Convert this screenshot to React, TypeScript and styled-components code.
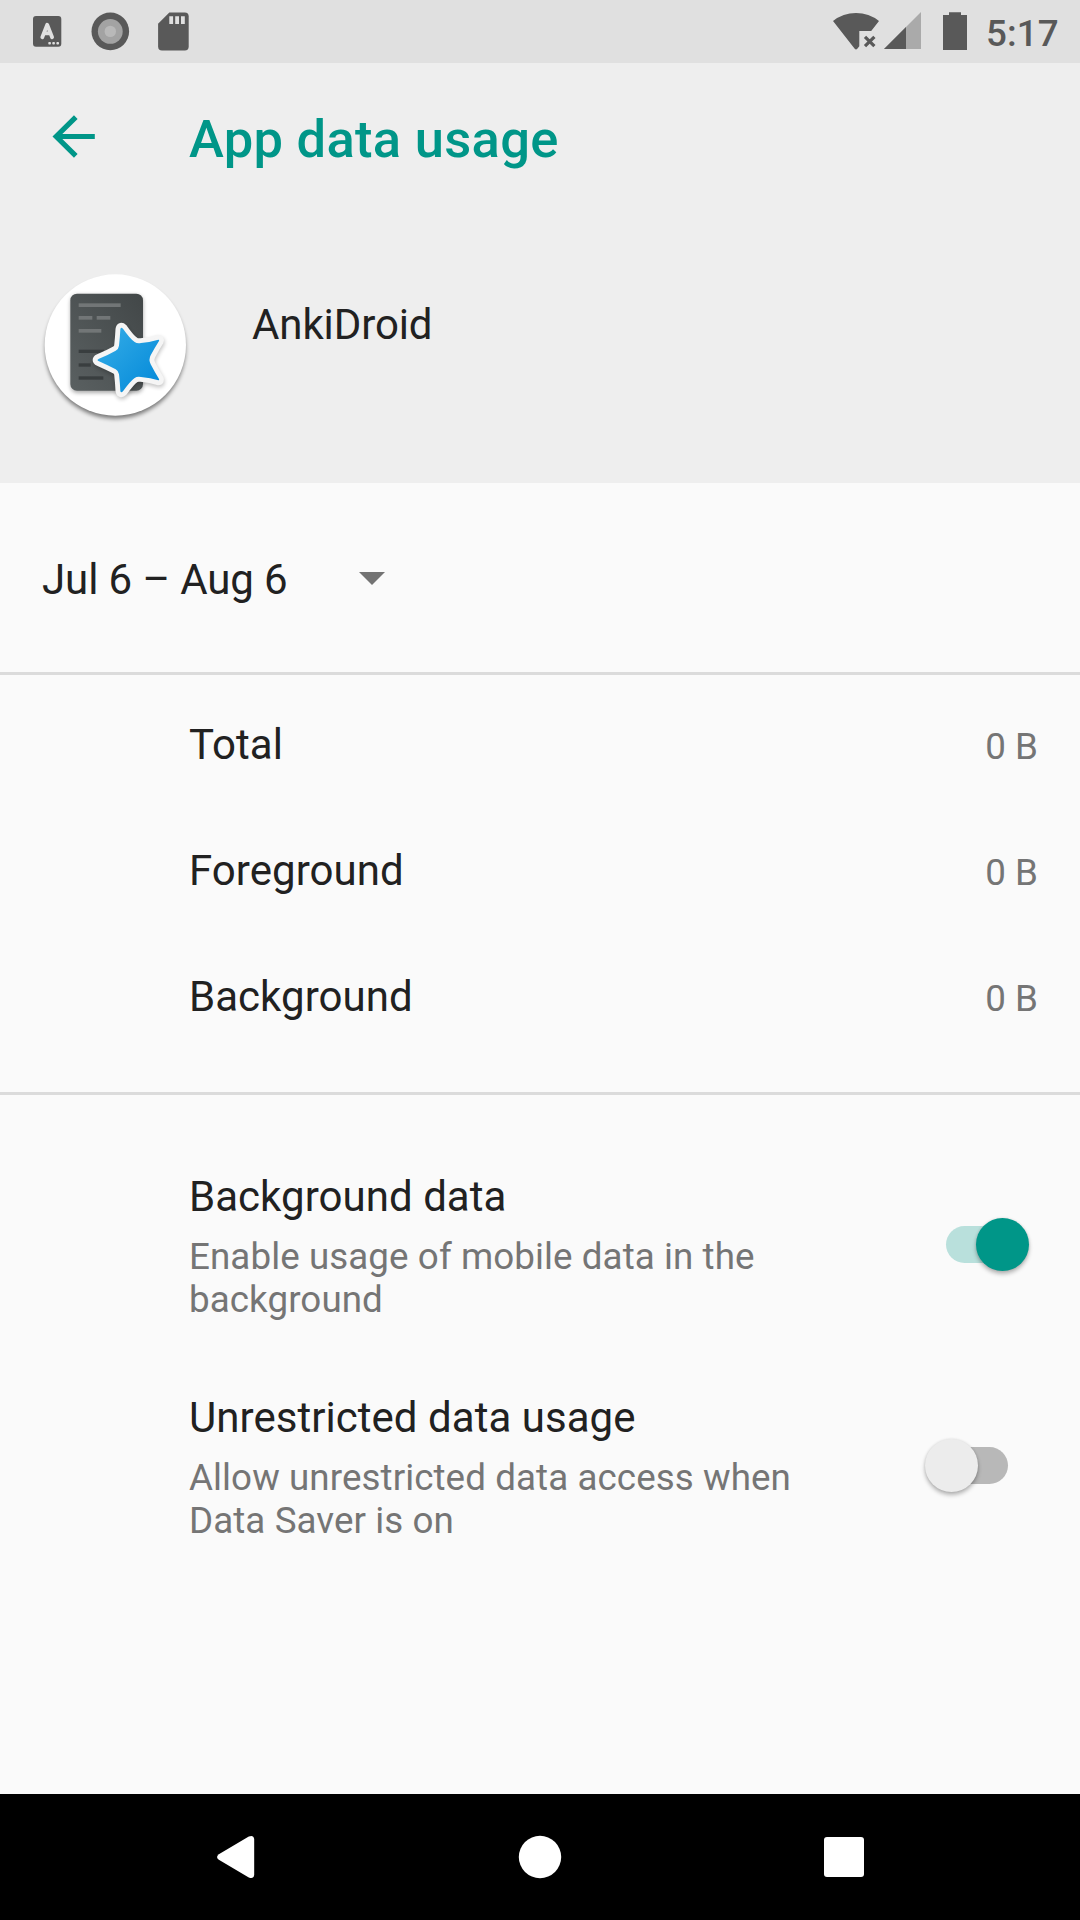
import React, { useState } from "react";
import styled, { createGlobalStyle } from "styled-components";

const GlobalStyle = createGlobalStyle`
  *, *::before, *::after { box-sizing: border-box; }
  html, body { margin: 0; padding: 0; background: #fafafa; }
  body { font-family: Roboto, "Noto Sans", sans-serif; color: #212121; }
`;

const Screen = styled.div`
  width: 1080px;
  height: 1920px;
  display: flex;
  flex-direction: column;
  background: #fafafa;
  overflow: hidden;
`;

const StatusBar = styled.div`
  flex: none;
  height: 63px;
  display: flex;
  align-items: flex-start;
  background: #e0e0e0;
  color: #595959;
  padding: 0 21px 0 32px;
`;

const StatusIcon = styled.svg<{ $gap?: number }>`
  display: block;
  flex: none;
  height: 63px;
  margin-left: ${(p) => p.$gap ?? 0}px;
`;

const Spacer = styled.div`
  flex: 1;
`;

const Clock = styled.time`
  flex: none;
  width: 73px;
  font-size: 36.75px;
  font-weight: 500;
  line-height: 63px;
  letter-spacing: 0.1px;
  padding-top: 2px;
  margin-left: 19px;
  white-space: nowrap;
`;

const Header = styled.header`
  flex: none;
  height: 420px;
  background: #eeeeee;
`;

const AppBar = styled.div`
  height: 147px;
  display: flex;
  align-items: center;
  padding-left: 42px;
`;

const BackButton = styled.button`
  width: 63px;
  height: 63px;
  padding: 0;
  border: 0;
  background: none;
  flex: none;
`;

const BackArrow = styled.svg`
  display: block;
`;

const Title = styled.h1`
  margin: 0 0 0 84px;
  padding-top: 5px;
  font-size: 52.5px;
  line-height: 62px;
  font-weight: 500;
  letter-spacing: 0.29px;
  color: #009688;
  white-space: nowrap;
`;

const Identity = styled.div`
  display: flex;
  align-items: flex-start;
  padding: 50px 0 0 30px;
`;

const AppName = styled.div`
  margin: 40px 0 0 52px;
  font-size: 42px;
  line-height: 49px;
  letter-spacing: -0.1px;
`;

const CycleSpinner = styled.div`
  flex: none;
  height: 192px;
  display: flex;
  align-items: flex-start;
  padding: 72px 0 0 42px;
  border-bottom: 3px solid #dbdbdb;
`;

const CycleLabel = styled.span`
  font-size: 42px;
  line-height: 49px;
  width: 317px;
  letter-spacing: -0.1px;
  white-space: nowrap;
`;

const Caret = styled.svg`
  display: block;
  margin-top: 17px;
`;

const UsageList = styled.section`
  flex: none;
  height: 420px;
  padding-top: 6px;
  border-bottom: 3px solid #dbdbdb;
`;

const UsageRow = styled.div`
  height: 126px;
  display: flex;
  justify-content: space-between;
  align-items: baseline;
  padding: 39px 42px 0 189px;
`;

const RowTitle = styled.div`
  font-size: 42px;
  line-height: 49px;
  letter-spacing: 0.04px;
  white-space: nowrap;
`;

const Amount = styled.div`
  font-size: 36.75px;
  line-height: 43px;
  color: #757575;
`;

const Preferences = styled.section`
  flex: 1;
  padding-top: 77px;
`;

const Preference = styled.div`
  height: 221px;
  display: flex;
  align-items: flex-start;
  justify-content: space-between;
  padding: 0 51px 0 189px;
`;

const Summary = styled.p`
  margin: 14px 0 0;
  width: 640px;
  font-size: 36.75px;
  line-height: 43px;
  letter-spacing: 0.08px;
  color: #757575;
`;

const Toggle = styled.button<{ $on: boolean }>`
  width: 104px;
  height: 53px;
  margin-top: 46px;
  padding: 0;
  border: 0;
  background: none;
  flex: none;
  display: grid;
  align-items: center;
  grid-template-columns: 21px 62px 21px;

  &::before {
    content: "";
    grid-area: 1 / 2;
    height: 37px;
    border-radius: 18.5px;
    background: ${(p) => (p.$on ? "#b9e0dc" : "#b8b8b8")};
  }

  &::after {
    content: "";
    grid-area: 1 / 1 / 2 / 4;
    justify-self: ${(p) => (p.$on ? "end" : "start")};
    width: 53px;
    height: 53px;
    border-radius: 50%;
    background: ${(p) => (p.$on ? "#009688" : "#ececec")};
    box-shadow: 0 3px 4px rgba(0, 0, 0, 0.28), 0 0 3px rgba(0, 0, 0, 0.1);
  }
`;

const NavBar = styled.nav`
  flex: none;
  height: 126px;
  display: flex;
  justify-content: center;
  gap: 178px;
  background: #000;
`;

const NavButton = styled.button`
  width: 126px;
  height: 126px;
  padding: 0;
  border: 0;
  background: none;
`;

const KeyboardIcon = () => (
  <StatusIcon width="30" viewBox="32 0 30 63">
    <rect x="33" y="16" width="28.3" height="30.7" rx="3" fill="#595959" />
    <path
      d="M42.3 37.2 L47.2 24.8 L52.1 37.2 M44 33.3 H50.5"
      fill="none"
      stroke="#e0e0e0"
      strokeWidth="3.8"
      strokeLinecap="round"
      strokeLinejoin="round"
    />
    <g fill="#e0e0e0">
      <rect x="48.3" y="42" width="2.6" height="2.6" rx=".8" />
      <rect x="52.3" y="42" width="2.6" height="2.6" rx=".8" />
      <rect x="56.4" y="42" width="2.6" height="2.6" rx=".8" />
    </g>
  </StatusIcon>
);

const RecordIcon = () => (
  <StatusIcon $gap={28} width="40" viewBox="90 0 40 63">
    <circle cx="110.3" cy="31.4" r="18.8" fill="#595959" />
    <circle cx="110.3" cy="31.4" r="12.4" fill="#a3a3a3" />
    <circle cx="110.3" cy="31.4" r="5.7" fill="#b9b9b9" />
  </StatusIcon>
);

const SdCardIcon = () => (
  <StatusIcon $gap={27} width="32" viewBox="157 0 32 63">
    <path
      d="M169.3 12.5 H184.8 Q188.7 12.5 188.7 16.3 V46.6 Q188.7 50.5 184.8 50.5 H162 Q158.1 50.5 158.1 46.6 V23.8 Z"
      fill="#595959"
    />
    <path
      d="M169.3 16.3 H173.1 V24 H169.3 Z M175.2 16.3 H179 V24 H175.2 Z M181 16.3 H184.8 V24 H181 Z"
      fill="#e0e0e0"
    />
  </StatusIcon>
);

const WifiOffIcon = () => (
  <StatusIcon width="47" viewBox="833 0 47 63">
    <path
      d="M833 21 Q843 13 856 13 Q869 13 879 21 L871.2 31 H859.3 V46.2 L857.3 48.8 Q856 50.2 854.7 48.8 Z"
      fill="#595959"
    />
    <path
      d="M865 36.8 L874.4 46.2 M874.4 36.8 L865 46.2"
      stroke="#595959"
      strokeWidth="3.2"
    />
  </StatusIcon>
);

const SignalIcon = () => (
  <StatusIcon $gap={4} width="37" viewBox="884 0 37 63">
    <path d="M884 49 L921 12 V49 Z" fill="#aaaaaa" />
    <path d="M884 49 L906 27 V49 Z" fill="#595959" />
  </StatusIcon>
);

const BatteryIcon = () => (
  <StatusIcon $gap={22} width="24" viewBox="943 0 24 63">
    <path
      d="M949 12.2 H961 V15 H967 V50 H943 V15 H949 Z"
      fill="#595959"
    />
  </StatusIcon>
);

const STAR =
  "M279 206 Q300 236 314 246 Q321 251 333 249 Q362 246 385 239 Q389 239 387 243 Q375 262 362 286 Q355 299 362 313 Q375 338 387 357 Q389 361 385 361 Q362 354 333 351 Q321 349 314 354 Q300 364 279 394 Q272 401 271 392 Q270 370 267 343 Q266 333 257 328 Q236 317 207 304 Q198 300 207 296 Q236 284 257 272 Q266 267 267 257 Q270 230 271 208 Q272 199 279 206 Z";

const AnkiIcon = () => (
  <svg width="170" height="170" viewBox="0 0 510 510">
    <defs>
      <linearGradient id="card" x1="0" y1="1" x2="1" y2="0">
        <stop offset="0" stopColor="#5a6061" />
        <stop offset="1" stopColor="#424748" />
      </linearGradient>
      <linearGradient id="star" x1="0" y1="0" x2="1" y2="1">
        <stop offset="0.1" stopColor="#31aae6" />
        <stop offset="1" stopColor="#0288d8" />
      </linearGradient>
      <filter id="soft" x="-20%" y="-20%" width="140%" height="140%">
        <feGaussianBlur stdDeviation="6" />
      </filter>
    </defs>
    <circle cx="256" cy="266" r="210" fill="#000" opacity="0.5" filter="url(#soft)" />
    <circle cx="256" cy="255" r="212" fill="#fff" />
    <rect x="122" y="106" width="217" height="292" rx="20" fill="#000" opacity="0.35" filter="url(#soft)" />
    <rect x="121" y="101" width="218" height="291" rx="20" fill="url(#card)" />
    <g fill="#727677">
      <rect x="146" y="130" width="126" height="11" />
      <rect x="146" y="168" width="41" height="11" />
      <rect x="200" y="168" width="41" height="11" />
      <rect x="146" y="207" width="68" height="11" />
    </g>
    <g fill="#393e3f">
      <rect x="146" y="269" width="76" height="10" />
      <rect x="146" y="310" width="36" height="10" />
      <rect x="146" y="349" width="74" height="10" />
    </g>
    <path d={STAR} transform="translate(2 7)" fill="#000" stroke="#000" strokeWidth="28" strokeLinejoin="round" opacity="0.24" filter="url(#soft)" />
    <path d={STAR} fill="#f5f5f5" stroke="#f5f5f5" strokeWidth="29" strokeLinejoin="round" />
    <path d={STAR} fill="url(#star)" />
  </svg>
);

const usage = [
  { label: "Total", amount: "0 B" },
  { label: "Foreground", amount: "0 B" },
  { label: "Background", amount: "0 B" },
];

const settings = [
  {
    id: "background",
    title: "Background data",
    summary: ["Enable usage of mobile data in the", "background"],
  },
  {
    id: "unrestricted",
    title: "Unrestricted data usage",
    summary: ["Allow unrestricted data access when", "Data Saver is on"],
  },
];

export default function App() {
  const [enabled, setEnabled] = useState<Record<string, boolean>>({
    background: true,
    unrestricted: false,
  });

  return (
    <>
      <GlobalStyle />
      <Screen>
        <StatusBar>
          <KeyboardIcon />
          <RecordIcon />
          <SdCardIcon />
          <Spacer />
          <WifiOffIcon />
          <SignalIcon />
          <BatteryIcon />
          <Clock>5:17</Clock>
        </StatusBar>

        <Header>
          <AppBar>
            <BackButton aria-label="Back">
              <BackArrow width="63" height="63" viewBox="42 105 63 63">
                <path
                  d="M75.8 117.2 L56.2 136.5 L75.8 155.8 M56.2 136.5 H94.8"
                  fill="none"
                  stroke="#009688"
                  strokeWidth="5.2"
                />
              </BackArrow>
            </BackButton>
            <Title>App data usage</Title>
          </AppBar>
          <Identity>
            <AnkiIcon />
            <AppName>AnkiDroid</AppName>
          </Identity>
        </Header>

        <CycleSpinner>
          <CycleLabel>Jul 6 – Aug 6</CycleLabel>
          <Caret width="26" height="13" viewBox="0 0 26 13">
            <path d="M0 0 H26 L13 13 Z" fill="#737373" />
          </Caret>
        </CycleSpinner>

        <UsageList>
          {usage.map((u) => (
            <UsageRow key={u.label}>
              <RowTitle>{u.label}</RowTitle>
              <Amount>{u.amount}</Amount>
            </UsageRow>
          ))}
        </UsageList>

        <Preferences>
          {settings.map((s) => (
            <Preference key={s.id}>
              <div>
                <RowTitle>{s.title}</RowTitle>
                <Summary>
                  {s.summary[0]}
                  <br />
                  {s.summary[1]}
                </Summary>
              </div>
              <Toggle
                role="switch"
                aria-label={s.title}
                aria-checked={enabled[s.id]}
                $on={enabled[s.id]}
                onClick={() => setEnabled((e) => ({ ...e, [s.id]: !e[s.id] }))}
              />
            </Preference>
          ))}
        </Preferences>

        <NavBar>
          <NavButton aria-label="Back">
            <svg width="126" height="126" viewBox="0 0 126 126">
              <path
                d="M45.8 60.2 L75.8 42.6 Q80.4 40.6 81.2 45 V81 Q80.4 85.4 75.8 83.4 L45.8 65.8 Q42.3 63 45.8 60.2 Z"
                fill="#fff"
              />
            </svg>
          </NavButton>
          <NavButton aria-label="Home">
            <svg width="126" height="126" viewBox="0 0 126 126">
              <circle cx="63" cy="63" r="21.2" fill="#fff" />
            </svg>
          </NavButton>
          <NavButton aria-label="Overview">
            <svg width="126" height="126" viewBox="0 0 126 126">
              <rect x="43" y="43" width="40" height="40" rx="3" fill="#fff" />
            </svg>
          </NavButton>
        </NavBar>
      </Screen>
    </>
  );
}
